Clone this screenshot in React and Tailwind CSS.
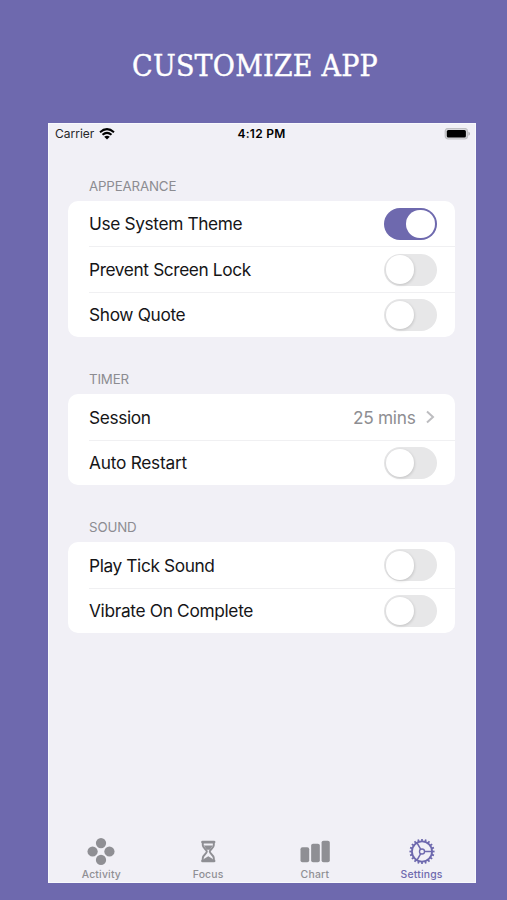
import React from "react";

const gearTeeth = Array.from({ length: 20 }, (_, i) => i * 18);

function Switch({ on }) {
  return (
    <div
      role="switch"
      aria-checked={Boolean(on)}
      className={`flex h-8 w-[53px] items-center rounded-full p-[2px] ${on ? "justify-end bg-[#6e69ae]" : "justify-start bg-[#e7e7e8]"}`}
    >
      <div className={`size-[28.5px] rounded-full bg-white ${on ? "" : "shadow-[0.5px_1px_3px_rgba(0,0,0,0.16)]"}`} />
    </div>
  );
}

function Row({ label, tracking, first, children }) {
  return (
    <div className="flex h-[45.4px] pl-[21px]">
      <div className={`flex flex-1 items-center justify-between border-t pr-[18.5px] ${first ? "border-transparent" : "border-[#f0f0f2]"}`}>
        <span className={`pt-[0.4px] text-[17.3px] whitespace-nowrap text-[#151517] ${tracking}`}>{label}</span>
        {children}
      </div>
    </div>
  );
}

function Section({ title, className, children }) {
  return (
    <section className={className}>
      <h2 className="flex h-[30px] items-center pt-[2px] pl-[21px] text-[13.3px] tracking-[-0.15px] text-[#8c8c91]">{title}</h2>
      <div className="overflow-hidden rounded-[10px] bg-white">{children}</div>
    </section>
  );
}

function ActivityIcon() {
  return (
    <svg width="30" height="30" viewBox="0 0 30 30" fill="currentColor">
      <circle cx="15" cy="6.3" r="5.3" />
      <circle cx="6.3" cy="15" r="5.3" />
      <circle cx="23.7" cy="15" r="5.3" />
      <circle cx="15" cy="23.7" r="5.3" />
    </svg>
  );
}

function HourglassIcon() {
  return (
    <svg width="30" height="30" viewBox="0 0 30 30" fill="none" stroke="currentColor">
      <path d="M9.4 5.3H21.2M9.4 24.7H21.2" strokeWidth="3" strokeLinecap="round" />
      <path d="M9.6 5.6v2.9c0 3.1 4.2 4.4 4.2 6.6s-4.2 3.5-4.2 6.6V24.5M21 5.6v2.9c0 3.1-4.2 4.4-4.2 6.6s4.2 3.5 4.2 6.6V24.5" strokeWidth="2" />
      <path d="M10.6 8.8h9.4l-3.2 4.4h-3zM15.3 20l4.6 2.8v1.7h-9.2v-1.7z" fill="currentColor" stroke="none" />
    </svg>
  );
}

function ChartIcon() {
  return (
    <svg width="32" height="30" viewBox="0 0 32 30" fill="currentColor">
      <rect x="1" y="10.6" width="9" height="15.5" rx="2" />
      <rect x="12" y="6.9" width="9" height="19.2" rx="2" />
      <rect x="22.8" y="3.8" width="8.5" height="22.3" rx="2" />
    </svg>
  );
}

function GearIcon() {
  return (
    <svg width="30" height="30" viewBox="0 0 30 30" fill="none" stroke="currentColor">
      <circle cx="15" cy="15" r="10.4" strokeWidth="1.9" />
      <circle cx="15" cy="15" r="2.6" strokeWidth="1.4" />
      <path d="M17.6 15H25.5M13.7 12.7L9.7 5.9M13.7 17.3L9.7 24.1" strokeWidth="1.6" />
      {gearTeeth.map((angle) => (
        <path key={angle} d="M15 4.4V2" strokeWidth="1.8" transform={`rotate(${angle} 15 15)`} />
      ))}
    </svg>
  );
}

function Tab({ label, active, children }) {
  return (
    <div className={`flex flex-1 flex-col items-center ${active ? "text-[#6e69ae]" : "text-[#8f8f94]"}`}>
      {children}
      <span className="mt-[2px] text-[10.4px] leading-[14px] font-medium tracking-[0.2px]">{label}</span>
    </div>
  );
}

export default function App() {
  return (
    <main className="flex h-[900px] w-[507px] flex-col bg-[#6e69ae] font-['Inter',sans-serif]">
      <h1 className="flex h-[123px] items-center justify-center pt-[7px] pl-[3px] font-['DejaVu_Serif',serif] text-[30px] tracking-[0.2px] [font-stretch:condensed] whitespace-nowrap text-white [-webkit-text-stroke:0.4px_white]">
        CUSTOMIZE APP
      </h1>
      <div className="ml-12 flex h-[760px] w-[428px] flex-col border border-[#f8f9fd] bg-[#f1f0f6]">
        <header className="grid h-[20px] grid-cols-3 items-center pr-[5px] pl-[6px] text-[12px] text-[#262629]">
          <div className="flex items-center gap-[5px]">
            <span>Carrier</span>
            <svg width="16" height="12" viewBox="0 0 16 12" fill="none" stroke="#000">
              <path d="M1 4.2Q8-1.9 15 4.2M3.5 6.8Q8 3 12.5 6.8" strokeWidth="2" />
              <path d="M8 11.4L5.2 8.7Q8 6.7 10.8 8.7Z" fill="#000" stroke="none" />
            </svg>
          </div>
          <span className="pr-[2px] text-center font-semibold tracking-[0.25px] text-black">4:12 PM</span>
          <svg className="justify-self-end" width="26" height="12" viewBox="0 0 26 12">
            <rect x="1.2" y="0.4" width="22.3" height="10.6" rx="3" fill="#d6d6da" stroke="#c0c0c4" strokeWidth="1.2" />
            <rect x="2.8" y="2" width="19.1" height="7.4" rx="1.5" fill="#000" />
            <path d="M24.5 3.7v4q1.4-.5 1.4-2T24.5 3.7" fill="#aaaaad" />
          </svg>
        </header>
        <div className="flex-1 pr-[20px] pl-[19px]">
          <Section title="APPEARANCE" className="pt-[27px]">
            <Row first label="Use System Theme" tracking="tracking-[-0.36px]"><Switch on /></Row>
            <Row label="Prevent Screen Lock" tracking="tracking-[-0.38px]"><Switch /></Row>
            <Row label="Show Quote" tracking="tracking-[-0.34px]"><Switch /></Row>
          </Section>
          <Section title="TIMER" className="pt-[27px]">
            <Row first label="Session" tracking="tracking-[-0.38px]">
              <div className="flex items-center gap-[9px] text-[17.3px] tracking-[-0.3px] text-[#8e8e92]">
                <span className="pt-[0.4px]">25 mins</span>
                <svg width="12" height="14" viewBox="0 0 12 14" fill="none" stroke="#bdbdc0" strokeWidth="2">
                  <path d="M2 1.5L8 7L2 12.5" />
                </svg>
              </div>
            </Row>
            <Row label="Auto Restart" tracking="tracking-[-0.24px]"><Switch /></Row>
          </Section>
          <Section title="SOUND" className="pt-[27.3px]">
            <Row first label="Play Tick Sound" tracking="tracking-[-0.38px]"><Switch /></Row>
            <Row label="Vibrate On Complete" tracking="tracking-[-0.32px]"><Switch /></Row>
          </Section>
        </div>
        <nav className="-ml-px flex h-[45px]">
          <Tab label="Activity"><ActivityIcon /></Tab>
          <Tab label="Focus"><HourglassIcon /></Tab>
          <Tab label="Chart"><ChartIcon /></Tab>
          <Tab label="Settings" active><GearIcon /></Tab>
        </nav>
      </div>
    </main>
  );
}
